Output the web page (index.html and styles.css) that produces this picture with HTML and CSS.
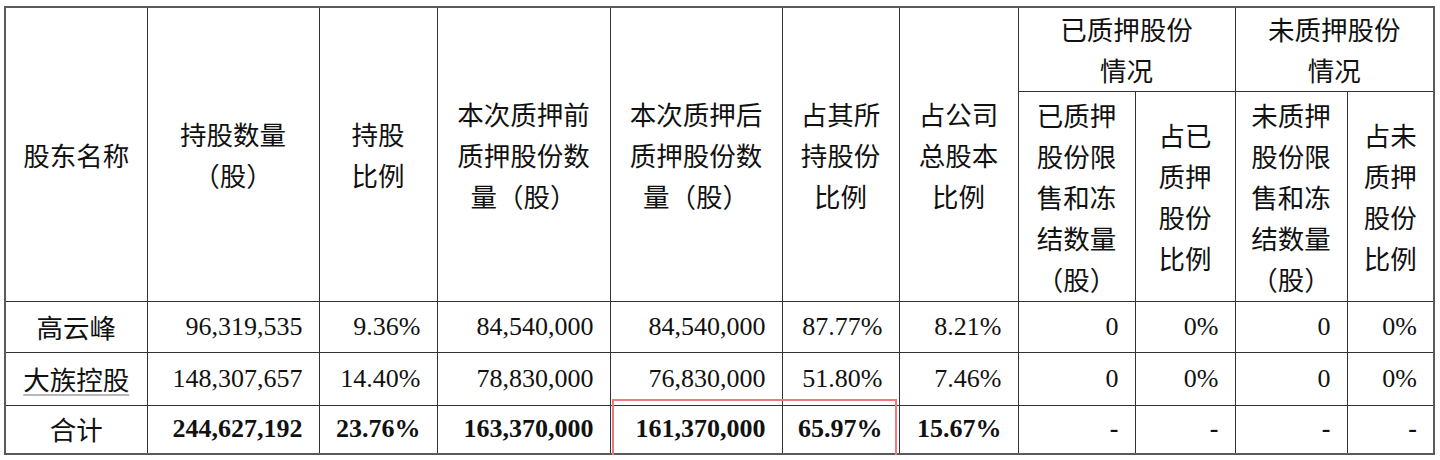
FILE: index.html
```html
<!DOCTYPE html>
<html lang="zh-CN">
<head>
<meta charset="utf-8">
<title>股份质押情况</title>
<link rel="stylesheet" href="styles.css">
</head>
<body>
<div class="wrap">
  <table class="pledge">
    <colgroup>
      <col class="c-name"><col class="c-hold"><col class="c-ratio"><col class="c-before"><col class="c-after">
      <col class="c-own"><col class="c-total"><col class="c-pq"><col class="c-pr"><col class="c-uq"><col class="c-ur">
    </colgroup>
    <thead>
      <tr class="h1">
        <th rowspan="2">股东名称</th>
        <th rowspan="2">持股数量<br>（股）</th>
        <th rowspan="2">持股<br>比例</th>
        <th rowspan="2">本次质押前<br>质押股份数<br>量（股）</th>
        <th rowspan="2">本次质押后<br>质押股份数<br>量（股）</th>
        <th rowspan="2">占其所<br>持股份<br>比例</th>
        <th rowspan="2">占公司<br>总股本<br>比例</th>
        <th colspan="2">已质押股份<br>情况</th>
        <th colspan="2">未质押股份<br>情况</th>
      </tr>
      <tr class="h2">
        <th>已质押<br>股份限<br>售和冻<br>结数量<br>（股）</th>
        <th>占已<br>质押<br>股份<br>比例</th>
        <th>未质押<br>股份限<br>售和冻<br>结数量<br>（股）</th>
        <th>占未<br>质押<br>股份<br>比例</th>
      </tr>
    </thead>
    <tbody>
      <tr class="r1">
        <td class="name">高云峰</td>
        <td>96,319,535</td><td>9.36%</td><td>84,540,000</td><td>84,540,000</td><td>87.77%</td><td>8.21%</td>
        <td>0</td><td>0%</td><td>0</td><td>0%</td>
      </tr>
      <tr class="r2">
        <td class="name"><span class="link">大族控股</span></td>
        <td>148,307,657</td><td>14.40%</td><td>78,830,000</td><td>76,830,000</td><td>51.80%</td><td>7.46%</td>
        <td>0</td><td>0%</td><td>0</td><td>0%</td>
      </tr>
      <tr class="r3 sum">
        <td class="name">合计</td>
        <td>244,627,192</td><td>23.76%</td><td>163,370,000</td><td>161,370,000</td><td>65.97%</td><td>15.67%</td>
        <td>-</td><td>-</td><td>-</td><td>-</td>
      </tr>
    </tbody>
  </table>
  <div class="mark"></div>
</div>
</body>
</html>
```

FILE: styles.css
```css
html, body {
  margin: 0;
  padding: 0;
  background: #ffffff;
}

.wrap {
  position: relative;
  padding: 6px 0 0 4px;
}

.pledge {
  border-collapse: collapse;
  table-layout: fixed;
  width: 1429px;
  border: 2px solid #5a5a5a;
  color: #111;
}

.c-name { width: 142px; }
.c-hold { width: 172px; }
.c-ratio { width: 118px; }
.c-before { width: 173px; }
.c-after { width: 172px; }
.c-own { width: 117px; }
.c-total { width: 119px; }
.c-pq { width: 117px; }
.c-pr { width: 100px; }
.c-uq { width: 112px; }
.c-ur { width: 87px; }

.pledge th,
.pledge td {
  border: 1px solid #333;
  padding: 0;
}

.pledge th {
  font-family: "Noto Sans CJK SC", "Noto Sans", sans-serif;
  font-weight: 400;
  font-size: 26.5px;
  line-height: 41px;
  text-align: center;
  vertical-align: middle;
}

.h1 { height: 84px; }
.h2 { height: 210px; }
.r1 { height: 51px; }
.r2 { height: 53px; }
.r3 { height: 49px; }

.pledge td {
  font-family: "Liberation Serif", "Times New Roman", serif;
  font-size: 26px;
  line-height: 30px;
  text-align: right;
  padding-right: 16px;
  vertical-align: middle;
}

.pledge td.name {
  font-family: "Noto Sans CJK SC", sans-serif;
  font-weight: 400;
  font-size: 26.5px;
  text-align: center;
  padding-right: 0;
}

.link {
  text-decoration: underline;
  text-decoration-color: #b8b8b8;
  text-underline-offset: 4px;
}

.sum td {
  font-weight: 700;
}

.sum td.name {
  font-weight: 400;
}

.mark {
  position: absolute;
  left: 612px;
  top: 399px;
  width: 281px;
  height: 56px;
  border: 2px solid #f07a7a;
}
```
